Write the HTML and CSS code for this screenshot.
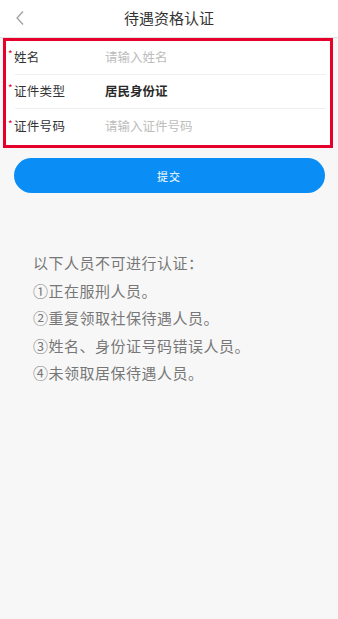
FILE: index.html
```html
<!DOCTYPE html>
<html lang="zh-CN">
  <head>
    <meta charset="UTF-8" />
    <meta name="viewport" content="width=device-width, initial-scale=1.0" />
    <title>待遇资格认证</title>
    <link rel="stylesheet" href="styles.css">
  </head>
  <body>
    <div class="nav-bar">
      <span class="back-btn">
        <svg width="10" height="16" viewBox="0 0 10 16">
          <path d="M8 1.5 L2 8 L8 14.5" fill="none" stroke="#a0a0a0" stroke-width="1.3" />
        </svg>
      </span>
      <h1>待遇资格认证</h1>
    </div>

    <div class="form-box">
      <div class="form-row">
        <label><span class="star">*</span>姓名</label>
        <span class="placeholder">请输入姓名</span>
      </div>
      <div class="form-row">
        <label><span class="star">*</span>证件类型</label>
        <span class="value">居民身份证</span>
      </div>
      <div class="form-row">
        <label><span class="star">*</span>证件号码</label>
        <span class="placeholder">请输入证件号码</span>
      </div>
    </div>

    <button class="submit-btn">提交</button>

    <div class="notes">
      <p>以下人员不可进行认证：</p>
      <p>①正在服刑人员。</p>
      <p>②重复领取社保待遇人员。</p>
      <p>③姓名、身份证号码错误人员。</p>
      <p>④未领取居保待遇人员。</p>
    </div>
  </body>
</html>
```

FILE: styles.css
```css
body {
  margin: 0;
  padding: 0;
  height: 100vh;
  background: #f7f7f7;
  font-family: "Noto Sans CJK SC", "Noto Sans", sans-serif;
  color: #333;
}

/* Top navigation */
.nav-bar {
  position: relative;
  height: 37px;
  background: #fff;
  border-bottom: 1px solid #e2e2e2;
  display: flex;
  align-items: center;
  justify-content: center;
}

.nav-bar h1 {
  margin: 0 0 3px;
  font-size: 15px;
  font-weight: normal;
  color: #333;
}

.back-btn {
  position: absolute;
  left: 15px;
  top: 10px;
  display: flex;
}

/* Form, outlined in red */
.form-box {
  background: #fff;
  border: 3px solid #e8002c;
  margin: 0 5px 0 3px;
  padding: 0 4px 0 9px;
}

.form-row {
  display: flex;
  align-items: center;
  height: 34px;
  box-sizing: border-box;
  padding-bottom: 3px;
  font-size: 12.5px;
  border-bottom: 1px solid #efefef;
}

.form-row:last-child {
  height: 36px;
  border-bottom: none;
}

/* label hangs a little left of the divider line */
.form-row label {
  width: 97px;
  margin-left: -7px;
  color: #333;
  letter-spacing: 0.3px;
  display: flex;
  align-items: center;
}

.star {
  color: #e8002c;
  font-size: 10px;
  width: 6px;
  margin-top: -5px;
}

.placeholder {
  color: #bdbdbd;
}

.value {
  color: #2a2a2a;
  font-weight: bold;
}

/* Submit button */
.submit-btn {
  display: block;
  width: 311px;
  height: 35px;
  margin: 10px auto 0;
  border: none;
  border-radius: 18px;
  background: #0a8ef6;
  color: #fff;
  font-family: inherit;
  font-size: 11px;
  letter-spacing: 1px;
}

/* Notes */
.notes {
  margin-top: 56px;
  padding-left: 33px;
  font-size: 15px;
  letter-spacing: 0.5px;
  color: #777;
}

.notes p {
  margin: 0;
  line-height: 27.5px;
}
```
